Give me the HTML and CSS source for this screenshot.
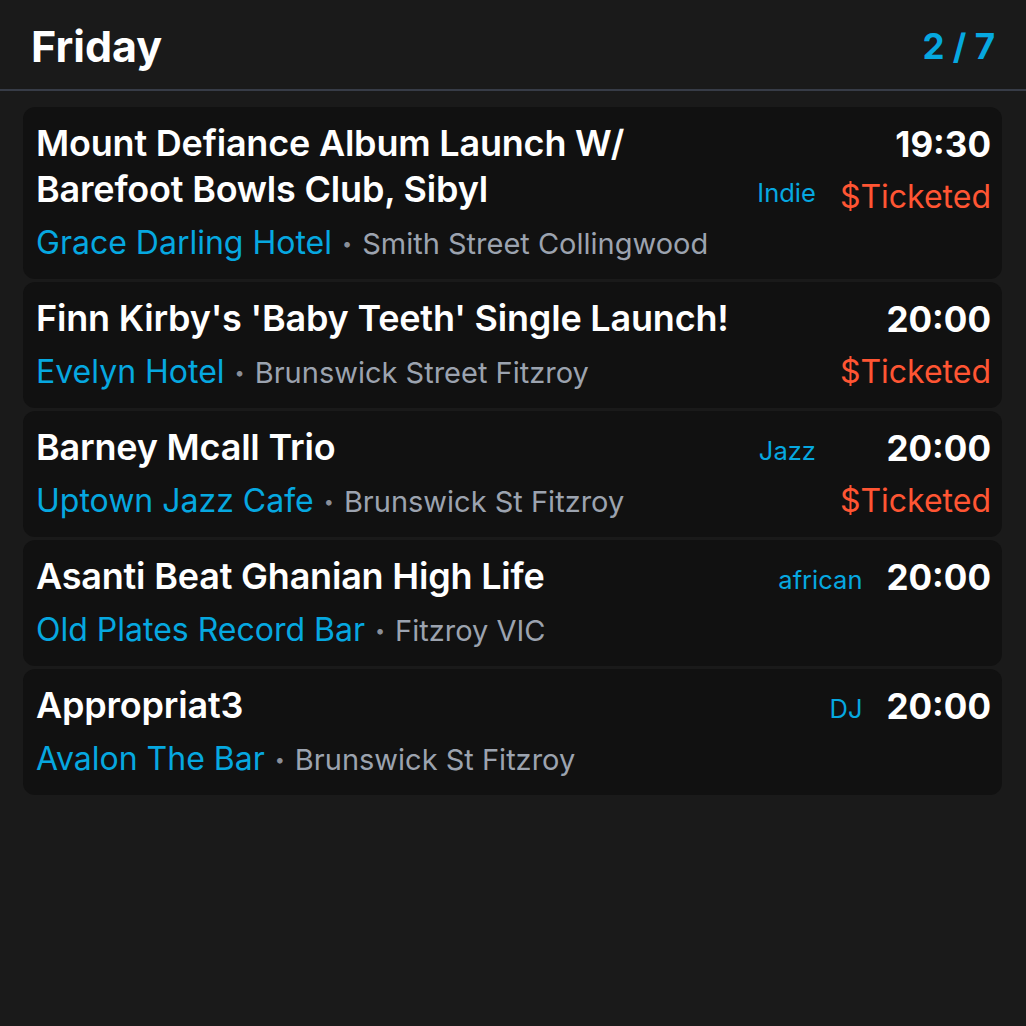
FILE: index.html
```html
<!DOCTYPE html>
<html>
<head>
<meta charset="utf-8">
<link rel="stylesheet" href="styles.css">
</head>
<body>
<div class="header">
  <div class="day">Friday</div>
  <div class="count">2 / 7</div>
</div>
<div class="list">
  <div class="card">
    <div class="main">
      <div class="title-row">
        <div class="title">Mount Defiance Album Launch W/ Barefoot Bowls Club, Sibyl</div>
        <div class="genre">Indie</div>
      </div>
      <div class="place"><span class="venue">Grace Darling Hotel</span><span class="dot">•</span><span class="addr">Smith Street Collingwood</span></div>
    </div>
    <div class="side">
      <div class="time">19:30</div>
      <div class="ticket">$Ticketed</div>
    </div>
  </div>
  <div class="card">
    <div class="main">
      <div class="title-row">
        <div class="title">Finn Kirby's 'Baby Teeth' Single Launch!</div>
      </div>
      <div class="place"><span class="venue">Evelyn Hotel</span><span class="dot">•</span><span class="addr">Brunswick Street Fitzroy</span></div>
    </div>
    <div class="side">
      <div class="time">20:00</div>
      <div class="ticket">$Ticketed</div>
    </div>
  </div>
  <div class="card">
    <div class="main">
      <div class="title-row">
        <div class="title">Barney Mcall Trio</div>
        <div class="genre">Jazz</div>
      </div>
      <div class="place"><span class="venue">Uptown Jazz Cafe</span><span class="dot">•</span><span class="addr">Brunswick St Fitzroy</span></div>
    </div>
    <div class="side">
      <div class="time">20:00</div>
      <div class="ticket">$Ticketed</div>
    </div>
  </div>
  <div class="card">
    <div class="main">
      <div class="title-row">
        <div class="title">Asanti Beat Ghanian High Life</div>
        <div class="genre">african</div>
      </div>
      <div class="place"><span class="venue">Old Plates Record Bar</span><span class="dot">•</span><span class="addr">Fitzroy VIC</span></div>
    </div>
    <div class="side">
      <div class="time">20:00</div>
    </div>
  </div>
  <div class="card">
    <div class="main">
      <div class="title-row">
        <div class="title">Appropriat3</div>
        <div class="genre">DJ</div>
      </div>
      <div class="place"><span class="venue">Avalon The Bar</span><span class="dot">•</span><span class="addr">Brunswick St Fitzroy</span></div>
    </div>
    <div class="side">
      <div class="time">20:00</div>
    </div>
  </div>
</div>
</body>
</html>
```
FILE: styles.css
```css
html, body {
  margin: 0;
  padding: 0;
  background: #1a1a1a;
  font-family: Inter, "Noto Sans", sans-serif;
  color: #fff;
}
.header {
  display: flex;
  justify-content: space-between;
  align-items: flex-start;
  padding: 22px 31px 19px 31px;
  border-bottom: 2px solid #373c47;
}
.day {
  font-size: 43px;
  line-height: 48px;
  font-weight: 700;
}
.count {
  font-size: 35px;
  line-height: 48px;
  font-weight: 700;
  color: #06a8e0;
}
.list {
  display: flex;
  flex-direction: column;
  gap: 3px;
  padding: 16px 24px 0 23px;
}
.card {
  display: flex;
  gap: 24px;
  background: #111111;
  border-radius: 12px;
  padding: 13px 11px 14px 13px;
}
.main {
  flex: 1;
  min-width: 0;
}
.title-row {
  display: flex;
  align-items: last baseline;
  gap: 20px;
}
.title {
  flex: 1;
  font-size: 36px;
  line-height: 46px;
  font-weight: 600;
  letter-spacing: -0.2px;
}
.genre {
  font-size: 25.5px;
  line-height: 30px;
  color: #06a8e0;
}
.place {
  margin-top: 8px;
  font-size: 32px;
  line-height: 45px;
  white-space: nowrap;
}
.venue {
  color: #06a8e0;
}
.dot {
  font-size: 18px;
  line-height: 1;
  color: #8a8f99;
  margin: 0 10px;
  vertical-align: 4px;
}
.addr {
  font-size: 29px;
  line-height: 1;
  color: #9ca3af;
}
.side {
  display: flex;
  flex-direction: column;
  align-items: flex-end;
}
.time {
  margin-top: 1px;
  font-size: 35px;
  line-height: 46px;
  font-weight: 700;
}
.ticket {
  margin-top: 7px;
  font-size: 32px;
  line-height: 45px;
  color: #ff5533;
}
```
